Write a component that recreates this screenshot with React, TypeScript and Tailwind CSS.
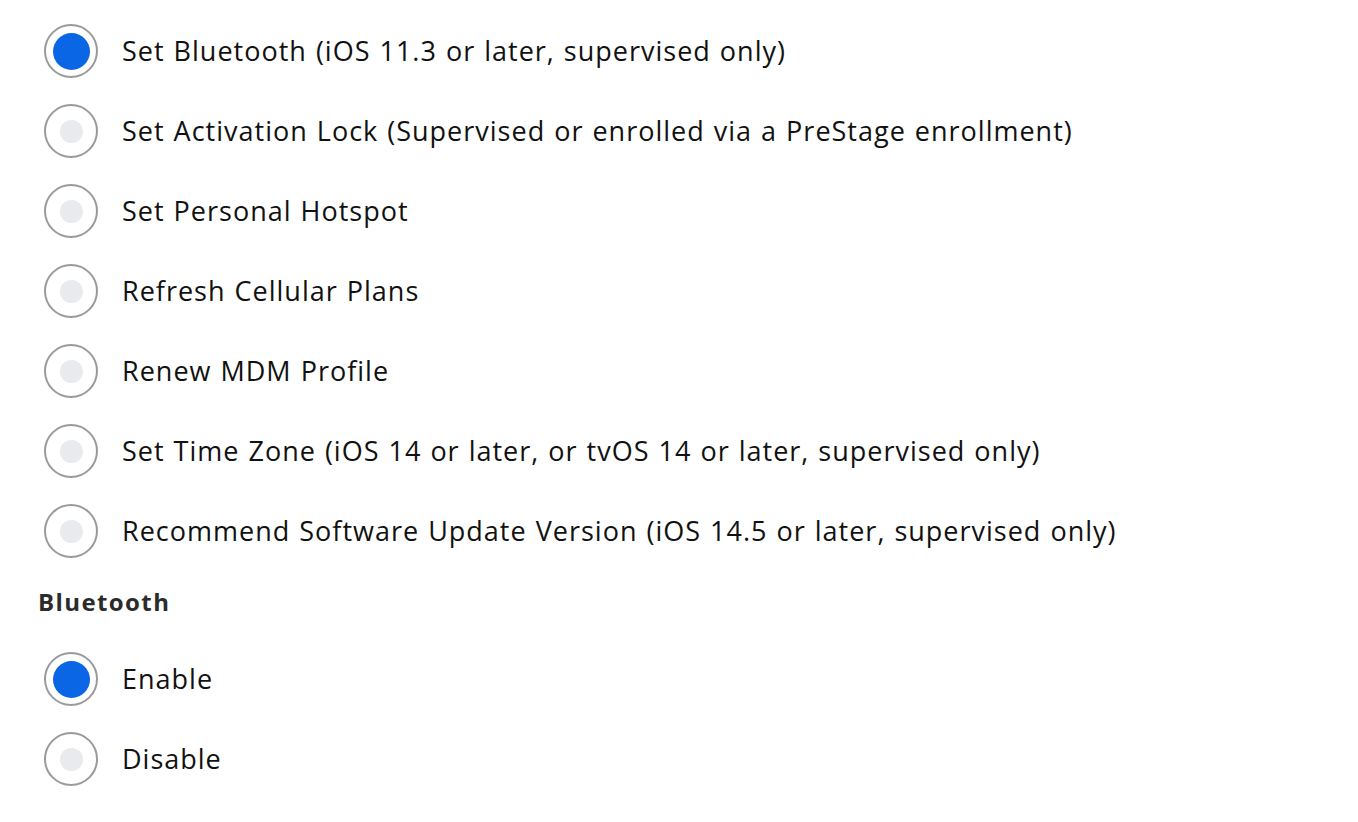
import { useState } from "react";

const actions = [
  "Set Bluetooth (iOS 11.3 or later, supervised only)",
  "Set Activation Lock (Supervised or enrolled via a PreStage enrollment)",
  "Set Personal Hotspot",
  "Refresh Cellular Plans",
  "Renew MDM Profile",
  "Set Time Zone (iOS 14 or later, or tvOS 14 or later, supervised only)",
  "Recommend Software Update Version (iOS 14.5 or later, supervised only)",
];

function Radio({ label, checked, onClick }: { label: string; checked: boolean; onClick: () => void }) {
  return (
    <button onClick={onClick} className="flex items-center h-[80px] pl-[44px] text-left">
      <span className="flex items-center justify-center w-[54px] h-[54px] rounded-full border-2 border-[#9a9a9a] bg-white shrink-0">
        {checked ? (
          <span className="w-[37px] h-[37px] rounded-full bg-[#0a66e4]" />
        ) : (
          <span className="w-[23px] h-[23px] rounded-full bg-[#e8eaed]" />
        )}
      </span>
      <span className="ml-[24px] text-[27px] text-[#111] tracking-[1px] [word-spacing:1px]">{label}</span>
    </button>
  );
}

export default function App() {
  const [action, setAction] = useState(0);
  const [bluetooth, setBluetooth] = useState("Enable");

  return (
    <div className="min-h-screen bg-white pt-[11px] font-['Open_Sans','Lato',sans-serif]">
      <div className="flex flex-col">
        {actions.map((a, i) => (
          <Radio key={a} label={a} checked={action === i} onClick={() => setAction(i)} />
        ))}
      </div>
      <h3 className="mt-[16px] mb-[22px] pl-[38px] h-[30px] leading-[30px] text-[24px] font-bold text-[#2b2b2b] tracking-[1.4px]">
        Bluetooth
      </h3>
      <div className="flex flex-col">
        {["Enable", "Disable"].map((b) => (
          <Radio key={b} label={b} checked={bluetooth === b} onClick={() => setBluetooth(b)} />
        ))}
      </div>
    </div>
  );
}
